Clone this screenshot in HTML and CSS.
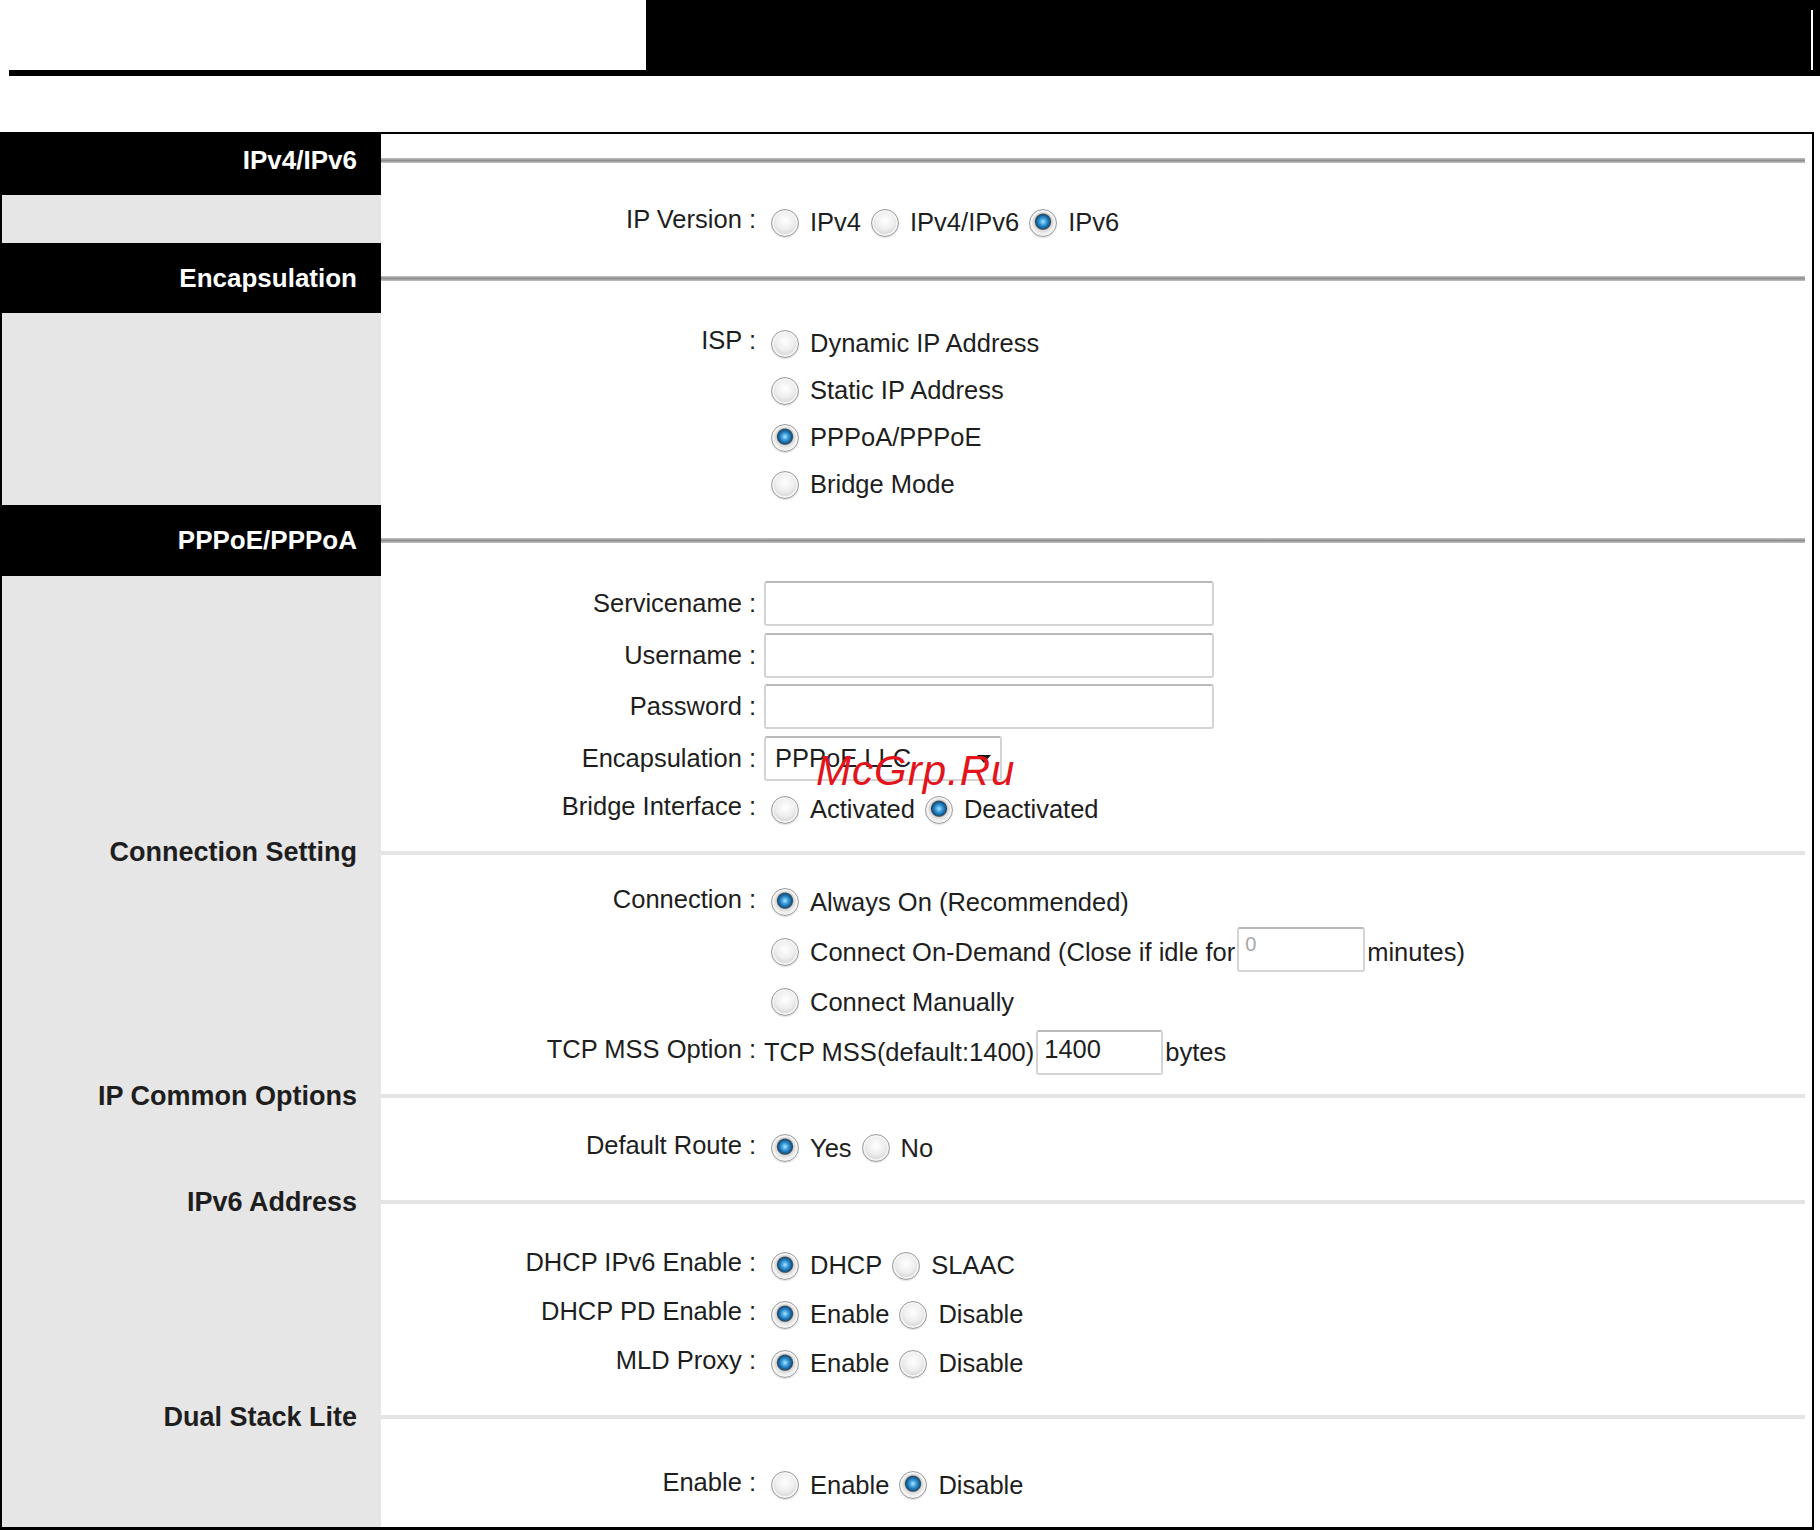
FILE: index.html
```html
<!DOCTYPE html>
<html lang="en">
<head>
  <meta charset="UTF-8" />
  <meta name="viewport" content="width=device-width, initial-scale=1.0"/>
  <title>WAN Setting</title>
  <link rel="stylesheet" href="styles.css">
</head>
<body>
  <div class="topbar">
    <div class="top-left"></div>
    <div class="top-right"><span class="top-mark"></span></div>
  </div>

  <div class="panel">
    <!-- IPv4/IPv6 -->
    <div class="sec head dark h-ipv">
      <div class="side">IPv4/IPv6</div>
      <div class="main"><hr class="rule"></div>
    </div>
    <div class="sec">
      <div class="side"></div>
      <div class="main c-ipver">
        <div class="row">
          <div class="label">IP Version :</div>
          <div class="field">
            <div class="line">
              <label class="opt"><input type="radio" class="radio" name="ipver">IPv4</label>
              <label class="opt"><input type="radio" class="radio" name="ipver">IPv4/IPv6</label>
              <label class="opt"><input type="radio" class="radio" name="ipver" checked>IPv6</label>
            </div>
          </div>
        </div>
      </div>
    </div>

    <!-- Encapsulation -->
    <div class="sec head dark h-encap">
      <div class="side">Encapsulation</div>
      <div class="main"><hr class="rule"></div>
    </div>
    <div class="sec">
      <div class="side"></div>
      <div class="main c-isp">
        <div class="row">
          <div class="label">ISP :</div>
          <div class="field">
            <div class="line"><label class="opt"><input type="radio" class="radio" name="isp">Dynamic IP Address</label></div>
            <div class="line"><label class="opt"><input type="radio" class="radio" name="isp">Static IP Address</label></div>
            <div class="line"><label class="opt"><input type="radio" class="radio" name="isp" checked>PPPoA/PPPoE</label></div>
            <div class="line"><label class="opt"><input type="radio" class="radio" name="isp">Bridge Mode</label></div>
          </div>
        </div>
      </div>
    </div>

    <!-- PPPoE/PPPoA -->
    <div class="sec head dark h-ppp">
      <div class="side">PPPoE/PPPoA</div>
      <div class="main"><hr class="rule"></div>
    </div>
    <div class="sec">
      <div class="side"></div>
      <div class="main c-ppp">
        <div class="row plain">
          <div class="label">Servicename :</div>
          <div class="field"><div class="line"><input type="text" class="text-input"></div></div>
        </div>
        <div class="row plain">
          <div class="label">Username :</div>
          <div class="field"><div class="line"><input type="text" class="text-input"></div></div>
        </div>
        <div class="row plain">
          <div class="label">Password :</div>
          <div class="field"><div class="line"><input type="password" class="text-input"></div></div>
        </div>
        <div class="row plain">
          <div class="label">Encapsulation :</div>
          <div class="field">
            <div class="line">
              <div class="select-wrap">
                <select class="select">
                  <option>PPPoE LLC</option>
                  <option>PPPoE VC-Mux</option>
                  <option>PPPoA LLC</option>
                  <option>PPPoA VC-Mux</option>
                </select>
                <svg class="select-arrow" width="16" height="10" viewBox="0 0 16 10"><path d="M1 1h14L8 9z" fill="#111"/></svg>
                <span class="watermark">McGrp.Ru</span>
              </div>
            </div>
          </div>
        </div>
        <div class="row">
          <div class="label">Bridge Interface :</div>
          <div class="field">
            <div class="line">
              <label class="opt"><input type="radio" class="radio" name="bridge">Activated</label>
              <label class="opt"><input type="radio" class="radio" name="bridge" checked>Deactivated</label>
            </div>
          </div>
        </div>
      </div>
    </div>

    <!-- Connection Setting -->
    <div class="sec head light h-conn">
      <div class="side">Connection Setting</div>
      <div class="main"><hr class="rule"></div>
    </div>
    <div class="sec">
      <div class="side"></div>
      <div class="main c-conn">
        <div class="row">
          <div class="label">Connection :</div>
          <div class="field">
            <div class="line"><label class="opt"><input type="radio" class="radio" name="conn" checked>Always On (Recommended)</label></div>
            <div class="line">
              <label class="opt"><input type="radio" class="radio" name="conn">Connect On-Demand (Close if idle for</label><input type="text" class="small-input idle" value="0"><span>minutes)</span>
            </div>
            <div class="line"><label class="opt"><input type="radio" class="radio" name="conn">Connect Manually</label></div>
          </div>
        </div>
        <div class="row">
          <div class="label">TCP MSS Option :</div>
          <div class="field">
            <div class="line">
              <span>TCP MSS(default:1400)</span><input type="text" class="small-input mss" value="1400"><span>bytes</span>
            </div>
          </div>
        </div>
      </div>
    </div>

    <!-- IP Common Options -->
    <div class="sec head light">
      <div class="side">IP Common Options</div>
      <div class="main"><hr class="rule"></div>
    </div>
    <div class="sec">
      <div class="side"></div>
      <div class="main c-route">
        <div class="row">
          <div class="label">Default Route :</div>
          <div class="field">
            <div class="line">
              <label class="opt"><input type="radio" class="radio" name="route" checked>Yes</label>
              <label class="opt"><input type="radio" class="radio" name="route">No</label>
            </div>
          </div>
        </div>
      </div>
    </div>

    <!-- IPv6 Address -->
    <div class="sec head light">
      <div class="side">IPv6 Address</div>
      <div class="main"><hr class="rule"></div>
    </div>
    <div class="sec">
      <div class="side"></div>
      <div class="main c-v6">
        <div class="row">
          <div class="label">DHCP IPv6 Enable :</div>
          <div class="field">
            <div class="line">
              <label class="opt"><input type="radio" class="radio" name="dhcp6" checked>DHCP</label>
              <label class="opt"><input type="radio" class="radio" name="dhcp6">SLAAC</label>
            </div>
          </div>
        </div>
        <div class="row">
          <div class="label">DHCP PD Enable :</div>
          <div class="field">
            <div class="line">
              <label class="opt"><input type="radio" class="radio" name="pd" checked>Enable</label>
              <label class="opt"><input type="radio" class="radio" name="pd">Disable</label>
            </div>
          </div>
        </div>
        <div class="row">
          <div class="label">MLD Proxy :</div>
          <div class="field">
            <div class="line">
              <label class="opt"><input type="radio" class="radio" name="mld" checked>Enable</label>
              <label class="opt"><input type="radio" class="radio" name="mld">Disable</label>
            </div>
          </div>
        </div>
      </div>
    </div>

    <!-- Dual Stack Lite -->
    <div class="sec head light">
      <div class="side">Dual Stack Lite</div>
      <div class="main"><hr class="rule"></div>
    </div>
    <div class="sec">
      <div class="side"></div>
      <div class="main c-ds">
        <div class="row">
          <div class="label">Enable :</div>
          <div class="field">
            <div class="line">
              <label class="opt"><input type="radio" class="radio" name="dslite">Enable</label>
              <label class="opt"><input type="radio" class="radio" name="dslite" checked>Disable</label>
            </div>
          </div>
        </div>
      </div>
    </div>
  </div>
</body>
</html>
```

FILE: styles.css
```css
* {
  box-sizing: border-box;
}

body {
  margin: 0;
  background: #fff;
  color: #1e1e1e;
  font-family: 'Liberation Sans', Arial, sans-serif;
  font-size: 25.5px;
}

/* barra superior */
.topbar {
  display: flex;
  height: 76px;
}

.top-left {
  width: 637px;
  margin-left: 9px;
  border-bottom: 6px solid #000;
}

.top-right {
  flex: 1;
  background: #000;
  display: flex;
  justify-content: flex-end;
  padding: 10px 7px 6px 0;
}

.top-mark {
  width: 2px;
  background: #fff;
}

/* tabla principal */
.panel {
  width: 1814px;
  margin-top: 56px;
  border: 2px solid #000;
  border-bottom-width: 3px;
}

.sec {
  display: grid;
  grid-template-columns: 379px 1fr;
}

.side {
  background: #e6e6e6;
}

.head .side {
  display: flex;
  align-items: center;
  justify-content: flex-end;
  padding-right: 24px;
  font-weight: bold;
  font-size: 27px;
  color: #1e1e1e;
  white-space: nowrap;
}

.head .main {
  display: flex;
  align-items: center;
}

.head.dark .side {
  background: #000;
  color: #fff;
  font-size: 26px;
}

.head.light {
  height: 38px;
}

.head.h-conn {
  height: 34.5px;
}

.h-ipv {
  height: 61px;
}

.h-ipv .side,
.h-ipv .main {
  padding-bottom: 9px;
}

.h-encap {
  height: 70px;
}

.h-ppp {
  height: 71px;
}

.rule {
  flex: 1;
  margin: 0 7px 0 0;
  border: 0;
  height: 5px;
  background: linear-gradient(#c4c4c4, #8e8e8e 50%, #c4c4c4);
}

.head.light .rule {
  height: 4px;
  background: #e4e4e4;
}

/* filas de formulario */
.c-ipver { --lh: 41px; padding-top: 7px; }
.c-isp { --lh: 47px; padding-top: 7px; height: 192px; }
.c-ppp { --lh: 51.5px; padding-top: 2px; }
.c-conn { --lh: 50px; padding-top: 7px; }
.c-route { --lh: 50px; padding: 8px 0 10px; }
.c-v6 { --lh: 49px; padding: 20px 0 10px; }
.c-ds { --lh: 50px; padding: 24px 0 17px; }

.row {
  display: grid;
  grid-template-columns: 375px 1fr;
  column-gap: 8px;
}

.label {
  height: var(--lh);
  display: flex;
  align-items: center;
  justify-content: flex-end;
  padding-bottom: 6px;
  white-space: nowrap;
}

.row.plain .label {
  padding-bottom: 0;
}

.line {
  height: var(--lh);
  display: flex;
  align-items: center;
  white-space: nowrap;
}

.opt {
  display: inline-flex;
  align-items: center;
}

.opt + .opt {
  margin-left: 3px;
}

.radio {
  appearance: none;
  -webkit-appearance: none;
  width: 28px;
  height: 28px;
  margin: 0 11px 0 7px;
  border-radius: 50%;
  border: 1px solid #9d9d9d;
  background: radial-gradient(circle at 50% 40%, #ffffff 0, #eeeeee 45%, #d0d0d0 75%, #bdbdbd 100%);
  box-shadow: inset 0 0 0 2px #f4f4f4, 0 1px 1px rgba(0, 0, 0, 0.12);
  flex: none;
}

.radio:checked {
  background: radial-gradient(circle at 50% 45%, #a8e4ff 0, #3a9ad8 18%, #0d5d98 34%, #3d4a55 39%, #d8d8d8 45%, #eeeeee 60%, #c4c4c4 100%);
}

.text-input {
  width: 450px;
  height: 45px;
  border: 2px solid #d4d4d4;
  border-top-color: #b9b9b9;
  border-radius: 3px;
  font: inherit;
  padding: 0 6px;
}

.small-input {
  width: 128px;
  height: 45px;
  border: 2px solid #d4d4d4;
  border-top-color: #b9b9b9;
  border-radius: 3px;
  font: inherit;
  color: #1e1e1e;
  padding: 0 6px 6px;
  margin: 0 2px;
}

.small-input.idle {
  font-size: 20px;
  color: #a8a8a8;
  padding-bottom: 10px;
  margin-top: -6px;
}

.small-input.mss {
  width: 127px;
}

.select-wrap {
  position: relative;
  display: inline-block;
}

.select {
  appearance: none;
  -webkit-appearance: none;
  width: 238px;
  height: 45px;
  border: 2px solid #d4d4d4;
  border-top-color: #b9b9b9;
  border-radius: 3px;
  background: #fff;
  font: inherit;
  color: #1e1e1e;
  padding: 0 0 0 9px;
}

.select-arrow {
  position: absolute;
  right: 10px;
  top: 18px;
  pointer-events: none;
}

.watermark {
  position: absolute;
  left: 52px;
  top: 14px;
  font-size: 42px;
  line-height: 42px;
  font-style: italic;
  letter-spacing: 1px;
  color: #e2141c;
  pointer-events: none;
}
```
